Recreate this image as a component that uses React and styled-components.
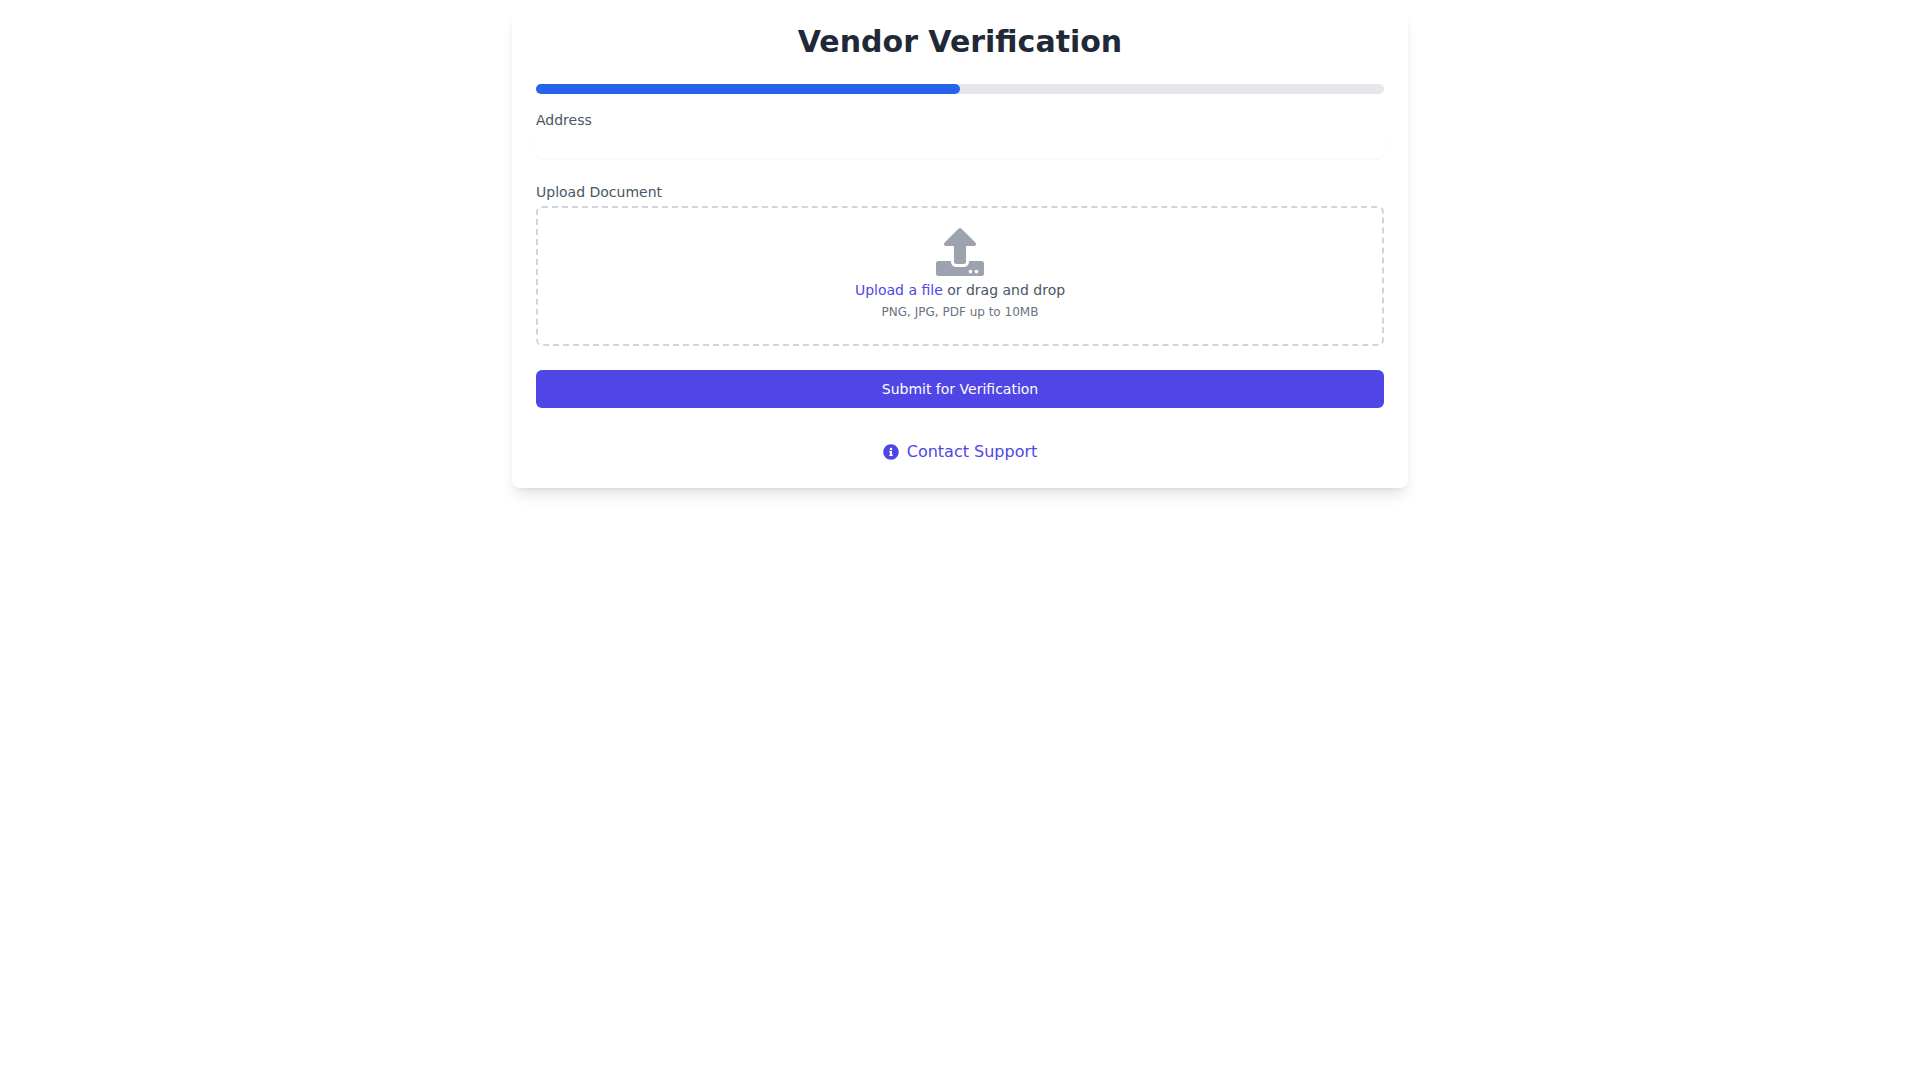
import React from "react";
import styled, { createGlobalStyle } from "styled-components";
import { FaUpload, FaInfoCircle } from "react-icons/fa";

const Global = createGlobalStyle`
  * { box-sizing: border-box; }
  html, body { margin: 0; background: #fff; }
  body { font-family: "DejaVu Sans", sans-serif; }
`;

const Page = styled.div`
  display: flex;
  justify-content: center;
  align-items: flex-start;
  min-height: 1080px;
  padding-top: 8px;
`;

const Card = styled.div`
  width: 896px;
  padding: 16px 24px 24px;
  background: #fff;
  border-radius: 8px;
  box-shadow: 0 10px 15px -3px rgba(0, 0, 0, 0.1), 0 4px 6px -4px rgba(0, 0, 0, 0.1);
`;

const Title = styled.h1`
  margin: 0 0 24px;
  font-size: 30px;
  line-height: 36px;
  font-weight: 700;
  text-align: center;
  color: #1f2937;
`;

const Track = styled.div`
  height: 10px;
  margin-bottom: 16px;
  border-radius: 9999px;
  background: #e5e7eb;
`;

const Fill = styled.div`
  height: 100%;
  border-radius: 9999px;
  background: #2563eb;
`;

const Label = styled.label`
  display: block;
  font-size: 14px;
  line-height: 20px;
  font-weight: 500;
  color: #4b5563;
`;

const Input = styled.div`
  height: 28px;
  margin-bottom: 24px;
  border-radius: 6px;
  box-shadow: 0 1px 2px rgba(0, 0, 0, 0.05);
`;

const Drop = styled.div`
  height: 140px;
  margin: 4px 0 24px;
  padding: 20px 24px 24px;
  border: 2px dashed #d1d5db;
  border-radius: 6px;
  display: flex;
  flex-direction: column;
  align-items: center;
  color: #9ca3af;
`;

const DropLine = styled.div`
  margin-top: 4px;
  font-size: 14px;
  line-height: 20px;
  color: #4b5563;
`;

const UploadLink = styled.span`
  color: #4f46e5;
`;

const Hint = styled.div`
  margin-top: 4px;
  font-size: 12px;
  line-height: 16px;
  color: #6b7280;
`;

const Submit = styled.button`
  display: block;
  width: 100%;
  height: 38px;
  padding: 0;
  border: 0;
  border-radius: 6px;
  background: #4f46e5;
  color: #fff;
  font-family: inherit;
  font-size: 14px;
`;

const Support = styled.div`
  margin-top: 32px;
  display: flex;
  align-items: center;
  justify-content: center;
  gap: 8px;
  font-size: 16px;
  line-height: 24px;
  color: #4f46e5;
`;

export default function App() {
  return (
    <>
      <Global />
      <Page>
        <Card>
          <Title>Vendor Verification</Title>
          <Track>
            <Fill style={{ width: "50%" }} />
          </Track>
          <Label>Address</Label>
          <Input />
          <Label>Upload Document</Label>
          <Drop>
            <FaUpload size={48} />
            <DropLine>
              <UploadLink>Upload a file</UploadLink> or drag and drop
            </DropLine>
            <Hint>PNG, JPG, PDF up to 10MB</Hint>
          </Drop>
          <Submit>Submit for Verification</Submit>
          <Support>
            <FaInfoCircle size={16} />
            Contact Support
          </Support>
        </Card>
      </Page>
    </>
  );
}
